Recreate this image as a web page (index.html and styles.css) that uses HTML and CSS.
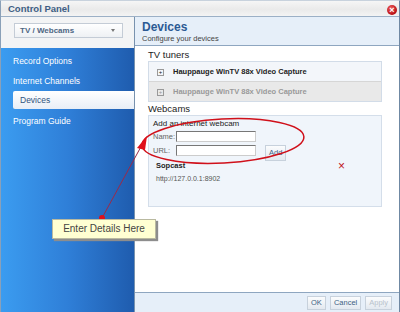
FILE: index.html
```html
<!DOCTYPE html>
<html lang="en">
<head>
  <meta charset="UTF-8">
  <title>Control Panel</title>
  <link rel="stylesheet" href="styles.css">
</head>
<body>
<div class="window">
  <div class="titlebar">
    <span class="title">Control Panel</span>
    <span class="close">&#215;</span>
  </div>
  <div class="body">
    <div class="sidebar">
      <div class="picker">
        <div class="select">TV / Webcams<span class="caret"></span></div>
      </div>
      <ul class="nav">
        <li>Record Options</li>
        <li>Internet Channels</li>
        <li class="current">Devices</li>
        <li>Program Guide</li>
      </ul>
    </div>
    <div class="main">
      <div class="head">
        <h1>Devices</h1>
        <p>Configure your devices</p>
      </div>
      <div class="content">
        <h2>TV tuners</h2>
        <div class="tuners">
          <div class="tuner"><span class="plus">+</span>Hauppauge WinTV 88x Video Capture</div>
          <div class="tuner off"><span class="plus">+</span>Hauppauge WinTV 88x Video Capture</div>
        </div>
        <h2>Webcams</h2>
        <div class="cams">
          <div class="add-title">Add an internet webcam</div>
          <div class="field"><label>Name:</label><span class="input"></span></div>
          <div class="field"><label>URL:</label><span class="input"></span><span class="btn">Add</span></div>
          <div class="cam">
            <div>
              <div class="cam-name">Sopcast</div>
              <div class="cam-url">http://127.0.0.1:8902</div>
            </div>
            <span class="remove">&#215;</span>
          </div>
        </div>
      </div>
      <div class="footer">
        <span class="btn">OK</span>
        <span class="btn">Cancel</span>
        <span class="btn disabled">Apply</span>
      </div>
    </div>
  </div>

  <!-- annotation drawn over the screenshot -->
  <svg class="marks" width="400" height="312" viewBox="0 0 400 312">
    <ellipse cx="223" cy="141" rx="81" ry="22" transform="rotate(-3 223 141)" fill="none" stroke="#d0101a" stroke-width="1.5"/>
    <line x1="102" y1="218" x2="143" y2="143" stroke="#9a2a4a" stroke-width="1"/>
    <polygon points="147,136 137,148 145,150" fill="#e0101a"/>
    <circle cx="102" cy="218" r="3" fill="#e0101a"/>
  </svg>
  <div class="callout">Enter Details Here</div>
</div>
</body>
</html>
```

FILE: styles.css
```css
* {
  margin: 0;
  padding: 0;
}

body {
  font-family: "Liberation Sans", Arial, sans-serif;
  font-size: 8px;
  color: #333;
  background: #fff;
}

ul {
  list-style: none;
}

.window {
  position: relative;
  width: 398px;
  height: 311px;
  border-left: 1px solid #8aa0b8;
  border-right: 1px solid #6f88a3;
  border-top: 1px solid #c8d2dd;
  display: flex;
  flex-direction: column;
  overflow: hidden;
}

.titlebar {
  height: 15px;
  display: flex;
  align-items: center;
  justify-content: space-between;
  padding: 0 2px 0 7px;
  background: linear-gradient(#f6f6f6, #eaeaea 55%, #f4f4f4);
  border-bottom: 1px solid #9cb0c6;
}

.title {
  font-weight: bold;
  font-size: 9.5px;
  color: #3e5e84;
}

.close {
  width: 10px;
  height: 10px;
  border-radius: 50%;
  background: radial-gradient(circle at 40% 35%, #f06060, #b80d12 70%);
  color: #fff;
  font-size: 9px;
  line-height: 10px;
  text-align: center;
  font-weight: bold;
  margin-top: 2px;
}

.body {
  flex: 1;
  display: flex;
}

.sidebar {
  width: 133px;
  display: flex;
  flex-direction: column;
  border-right: 1px solid #7892ae;
}

.picker {
  height: 31px;
  padding: 6px 13px 0 13px;
  background: #f3f4f5;
  box-sizing: border-box;
}

.select {
  width: 102px;
  height: 13px;
  line-height: 13px;
  border: 1px solid #c4ccd6;
  background: linear-gradient(#fff, #eef1f4);
  padding-left: 5px;
  color: #4e6682;
  font-weight: bold;
  font-size: 8px;
  position: relative;
}

.caret {
  position: absolute;
  right: 7px;
  top: 5px;
  border-left: 2px solid transparent;
  border-right: 2px solid transparent;
  border-top: 3px solid #777;
}

.nav {
  flex: 1;
  padding-top: 3px;
  background: linear-gradient(to right, #3b9cf0, #2f7fd8 50%, #1f5cae);
}

.nav li {
  height: 20px;
  line-height: 20px;
  padding-left: 12px;
  color: #fff;
  font-size: 8.5px;
}

.nav li.current {
  margin: 0 0 2px 12px;
  padding-left: 7px;
  height: 18px;
  line-height: 18px;
  background: linear-gradient(#ffffff, #e8eef6);
  color: #2f5480;
  border-radius: 2px 0 0 2px;
}

.main {
  flex: 1;
  display: flex;
  flex-direction: column;
}

.head {
  height: 29px;
  padding: 3px 0 0 7px;
  background: #e6eff9;
  border-bottom: 1px solid #8ea6c0;
  box-sizing: border-box;
}

.head h1 {
  font-size: 12px;
  color: #2c5a94;
  font-weight: bold;
  line-height: 14px;
}

.head p {
  font-size: 7.5px;
  color: #444;
}

.content {
  flex: 1;
  padding: 2px 17px 0 13px;
}

.content h2 {
  font-size: 9.5px;
  font-weight: normal;
  color: #222;
  line-height: 13px;
}

.tuners {
  border: 1px solid #d2dce8;
}

.tuner {
  height: 19px;
  line-height: 19px;
  background: #f3f6fa;
  color: #222;
  font-size: 7.5px;
  font-weight: bold;
  padding-left: 8px;
}

.tuner.off {
  background: #e9e9e9;
  color: #999;
  border-top: 1px solid #d6d6d6;
}

.plus {
  display: inline-block;
  width: 5px;
  height: 5px;
  border: 1px solid #999;
  font-size: 6px;
  line-height: 5px;
  text-align: center;
  margin-right: 9px;
  font-weight: normal;
}

.cams {
  height: 92px;
  border: 1px solid #d4deea;
  background: #f0f5fb;
  padding: 2px 0 0 4px;
  box-sizing: border-box;
}

.add-title {
  font-size: 8px;
  color: #222;
  line-height: 11px;
}

.field {
  display: flex;
  align-items: center;
  height: 14px;
  font-size: 7.5px;
  color: #666;
}

.field label {
  width: 23px;
}

.input {
  width: 78px;
  height: 9px;
  border: 1px solid #777;
  border-bottom-color: #ccc;
  border-right-color: #ccc;
  background: #fff;
}

.field .btn {
  margin-left: 9px;
  margin-top: 5px;
}

.btn {
  display: inline-block;
  height: 14px;
  line-height: 14px;
  padding: 0 3px;
  border: 1px solid #c7d1dc;
  background: linear-gradient(#fbfcfd, #e3e9f0);
  color: #3e5e84;
  font-size: 7.5px;
}

.btn.disabled {
  color: #b8c2cc;
}

.cam {
  display: flex;
  justify-content: space-between;
  padding: 0 36px 0 3px;
  margin-top: 3px;
}

.cam-name {
  font-weight: bold;
  font-size: 7.5px;
  color: #222;
  line-height: 12px;
}

.cam-url {
  font-size: 7px;
  color: #555;
  line-height: 13px;
}

.remove {
  color: #c0141a;
  font-size: 12px;
  line-height: 12px;
}

.footer {
  height: 19px;
  display: flex;
  justify-content: flex-end;
  align-items: center;
  gap: 4px;
  padding-right: 7px;
  background: #e6eff9;
  border-top: 1px solid #8ea6c0;
}

.footer .btn {
  height: 12px;
  line-height: 12px;
}

.marks {
  position: absolute;
  left: -1px;
  top: -1px;
  pointer-events: none;
}

.callout {
  position: absolute;
  left: 51px;
  top: 218px;
  width: 102px;
  height: 18px;
  line-height: 18px;
  text-align: center;
  background: #ffffd2;
  border: 1px solid #b9b9a0;
  box-shadow: 2px 2px 1px #8d8d8d;
  font-size: 10px;
  color: #444;
}
```
